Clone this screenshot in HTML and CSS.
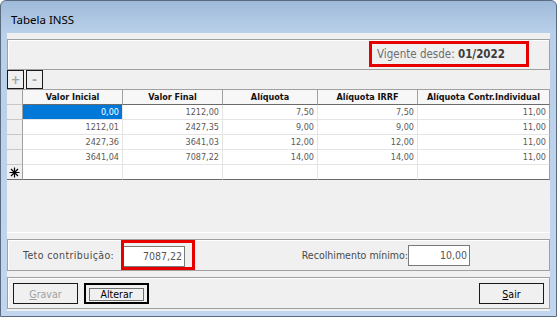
FILE: index.html
```html
<!DOCTYPE html>
<html lang="pt-BR">
<head>
    <meta charset="UTF-8">
    <title>Tabela INSS</title>
    <link rel="stylesheet" href="styles.css">
</head>
<body>
    <div class="window">
        <div class="titlebar">Tabela INSS</div>
        <div class="client">
            <!-- vigência -->
            <div class="panel panel-top">
                <div class="mark mark-vigente">
                    <span class="lbl-light">Vigente desde:</span> <b>01/2022</b>
                </div>
            </div>

            <!-- inserir / excluir -->
            <div class="toolbar">
                <button class="tool">+</button>
                <button class="tool">-</button>
            </div>

            <!-- grade -->
            <div class="grid-wrap">
                <div class="grid">
                    <div class="hd sel"></div>
                    <div class="hd">Valor Inicial</div>
                    <div class="hd">Valor Final</div>
                    <div class="hd">Alíquota</div>
                    <div class="hd">Alíquota IRRF</div>
                    <div class="hd">Alíquota Contr.Individual</div>

                    <div class="cell sel"></div>
                    <div class="cell active">0,00</div>
                    <div class="cell">1212,00</div>
                    <div class="cell">7,50</div>
                    <div class="cell">7,50</div>
                    <div class="cell">11,00</div>

                    <div class="cell sel"></div>
                    <div class="cell">1212,01</div>
                    <div class="cell">2427,35</div>
                    <div class="cell">9,00</div>
                    <div class="cell">9,00</div>
                    <div class="cell">11,00</div>

                    <div class="cell sel"></div>
                    <div class="cell">2427,36</div>
                    <div class="cell">3641,03</div>
                    <div class="cell">12,00</div>
                    <div class="cell">12,00</div>
                    <div class="cell">11,00</div>

                    <div class="cell sel"></div>
                    <div class="cell">3641,04</div>
                    <div class="cell">7087,22</div>
                    <div class="cell">14,00</div>
                    <div class="cell">14,00</div>
                    <div class="cell">11,00</div>

                    <div class="cell sel last">
                        <svg width="11" height="11" viewBox="0 0 11 11">
                            <path d="M5.5 0.5v10M0.5 5.5h10M2 2l7 7M9 2l-7 7" stroke="#000" stroke-width="1.2" fill="none"/>
                        </svg>
                    </div>
                    <div class="cell last"></div>
                    <div class="cell last"></div>
                    <div class="cell last"></div>
                    <div class="cell last"></div>
                    <div class="cell last"></div>
                </div>
            </div>

            <!-- teto / recolhimento -->
            <div class="panel panel-values">
                <div class="field">
                    <span class="lbl lbl-teto">Teto contribuição:</span>
                    <div class="mark mark-teto">
                        <div class="edit edit-teto">7087,22</div>
                    </div>
                </div>
                <div class="field field-right">
                    <span class="lbl">Recolhimento mínimo:</span>
                    <div class="edit edit-min">10,00</div>
                </div>
            </div>

            <!-- botões -->
            <div class="panel panel-buttons">
                <button class="btn" disabled><u>G</u>ravar</button>
                <button class="btn btn-focus"><span class="focus-rect">Alterar</span></button>
                <button class="btn btn-right"><u>S</u>air</button>
            </div>
        </div>
    </div>
</body>
</html>
```

FILE: styles.css
```css
body {
    margin: 0;
    background-color: #fff;
    font-family: "DejaVu Sans Condensed", "DejaVu Sans", sans-serif;
    font-stretch: condensed;
}
.window {
    width: 557px;
    height: 317px;
    box-sizing: border-box;
    border: 1px solid #5b6b7f;
    border-radius: 6px 6px 0 0;
    background: linear-gradient(#9fbad9, #b9d0ea 32px, #c1d6ee);
    box-shadow: 0 1px 0 #2a8fd8;
}
.titlebar {
    height: 32px;
    box-sizing: border-box;
    padding: 9px 0 0 10px;
    line-height: 20px;
    font-family: "Noto Sans", sans-serif;
    font-stretch: normal;
    font-size: 11.5px;
    color: #000;
}
.client {
    width: 543px;
    margin: 0 6px;
    height: 278px;
    box-sizing: border-box;
    padding-top: 6px;
    background-color: #f0f0f0;
}
.panel {
    box-sizing: border-box;
    border: 1px solid #a0a0a0;
    box-shadow: inset 1px 1px 0 #fff;
    display: flex;
}
.panel-top {
    height: 31px;
    justify-content: flex-end;
    padding: 1px 20px 0 0;
}
.mark {
    box-sizing: border-box;
    border: 3px solid #e60000;
}
.mark-vigente {
    width: 160px;
    height: 26px;
    padding-left: 5px;
    line-height: 20px;
    font-size: 11.5px;
    color: #3c3c3c;
    white-space: nowrap;
}
.lbl-light {
    color: #6e6e6e;
}
.toolbar {
    height: 19px;
    display: flex;
    gap: 2px;
}
.tool {
    width: 17px;
    height: 19px;
    margin: 0;
    padding: 0;
    border: 1px solid #1a1a1a;
    background-color: #f0f0f0;
    color: #a3a3a3;
    font-family: "DejaVu Sans", sans-serif;
    font-weight: bold;
    font-size: 12px;
    line-height: 16px;
}
.grid-wrap {
    height: 144px;
    box-sizing: border-box;
    border-bottom: 1px solid #fff;
}
.grid {
    display: grid;
    grid-template-columns: 16px 100px 100px 95px 100px 132px;
    font-size: 9px;
}
.hd {
    height: 16px;
    box-sizing: border-box;
    border-top: 1px solid #a0a0a0;
    border-right: 1px solid #a0a0a0;
    border-bottom: 1px solid #6a6a6a;
    background-color: #f7f7f7;
    text-align: center;
    font-weight: bold;
    line-height: 14px;
    color: #111;
    white-space: nowrap;
}
.cell {
    height: 15px;
    box-sizing: border-box;
    border-right: 1px solid #e4e4e4;
    border-bottom: 1px solid #e4e4e4;
    background-color: #fff;
    text-align: right;
    padding-right: 3px;
    line-height: 14px;
    color: #5a5a5a;
}
.cell:nth-child(6n) {
    border-right-color: #a0a0a0;
}
.sel {
    background-color: #f0f0f0;
    border-right-color: #a0a0a0;
    border-bottom-color: #c8c8c8;
    padding: 0;
    text-align: center;
}
.sel svg {
    display: block;
    margin: 2px 0 0 2px;
}
.active {
    background-color: #0078d7;
    color: #fff;
}
.last {
    border-bottom-color: #6a6a6a;
}
.panel-values {
    height: 32px;
    margin-top: 6px;
    padding: 0 79px 0 15px;
    align-items: flex-start;
    font-size: 10.5px;
    color: #4a4a4a;
}
.field {
    display: flex;
    align-items: flex-start;
}
.field-right {
    margin-left: auto;
    padding-top: 5px;
}
.lbl {
    line-height: 21px;
}
.lbl-teto {
    width: 92px;
    margin: 5px 6px 0 0;
    letter-spacing: 0.4px;
    white-space: nowrap;
}
.mark-teto {
    width: 74px;
    height: 30px;
    padding-top: 3px;
}
.edit {
    height: 21px;
    box-sizing: border-box;
    border: 1px solid #7a7a7a;
    background-color: #fff;
    text-align: right;
    padding-right: 2px;
    line-height: 19px;
    color: #555;
}
.edit-teto {
    width: 61px;
    border-left: 0;
}
.edit-min {
    width: 62px;
}
.panel-buttons {
    height: 32px;
    margin-top: 6px;
    padding: 5px 5px 0 5px;
    align-items: flex-start;
}
.btn {
    width: 65px;
    height: 21px;
    margin: 0 6px 0 0;
    padding: 0;
    border: 1px solid #1a1a1a;
    background-color: #f0f0f0;
    font-family: "DejaVu Sans Condensed", "DejaVu Sans", sans-serif;
    font-stretch: condensed;
    font-size: 10.5px;
    color: #000;
}
.btn:disabled {
    color: #a0a0a0;
}
.btn-focus {
    border: 2px solid #000;
    padding: 3px;
}
.focus-rect {
    display: block;
    height: 11px;
    border: 1px solid #707070;
    line-height: 11px;
}
.btn-right {
    margin: 0 0 0 auto;
}
```
